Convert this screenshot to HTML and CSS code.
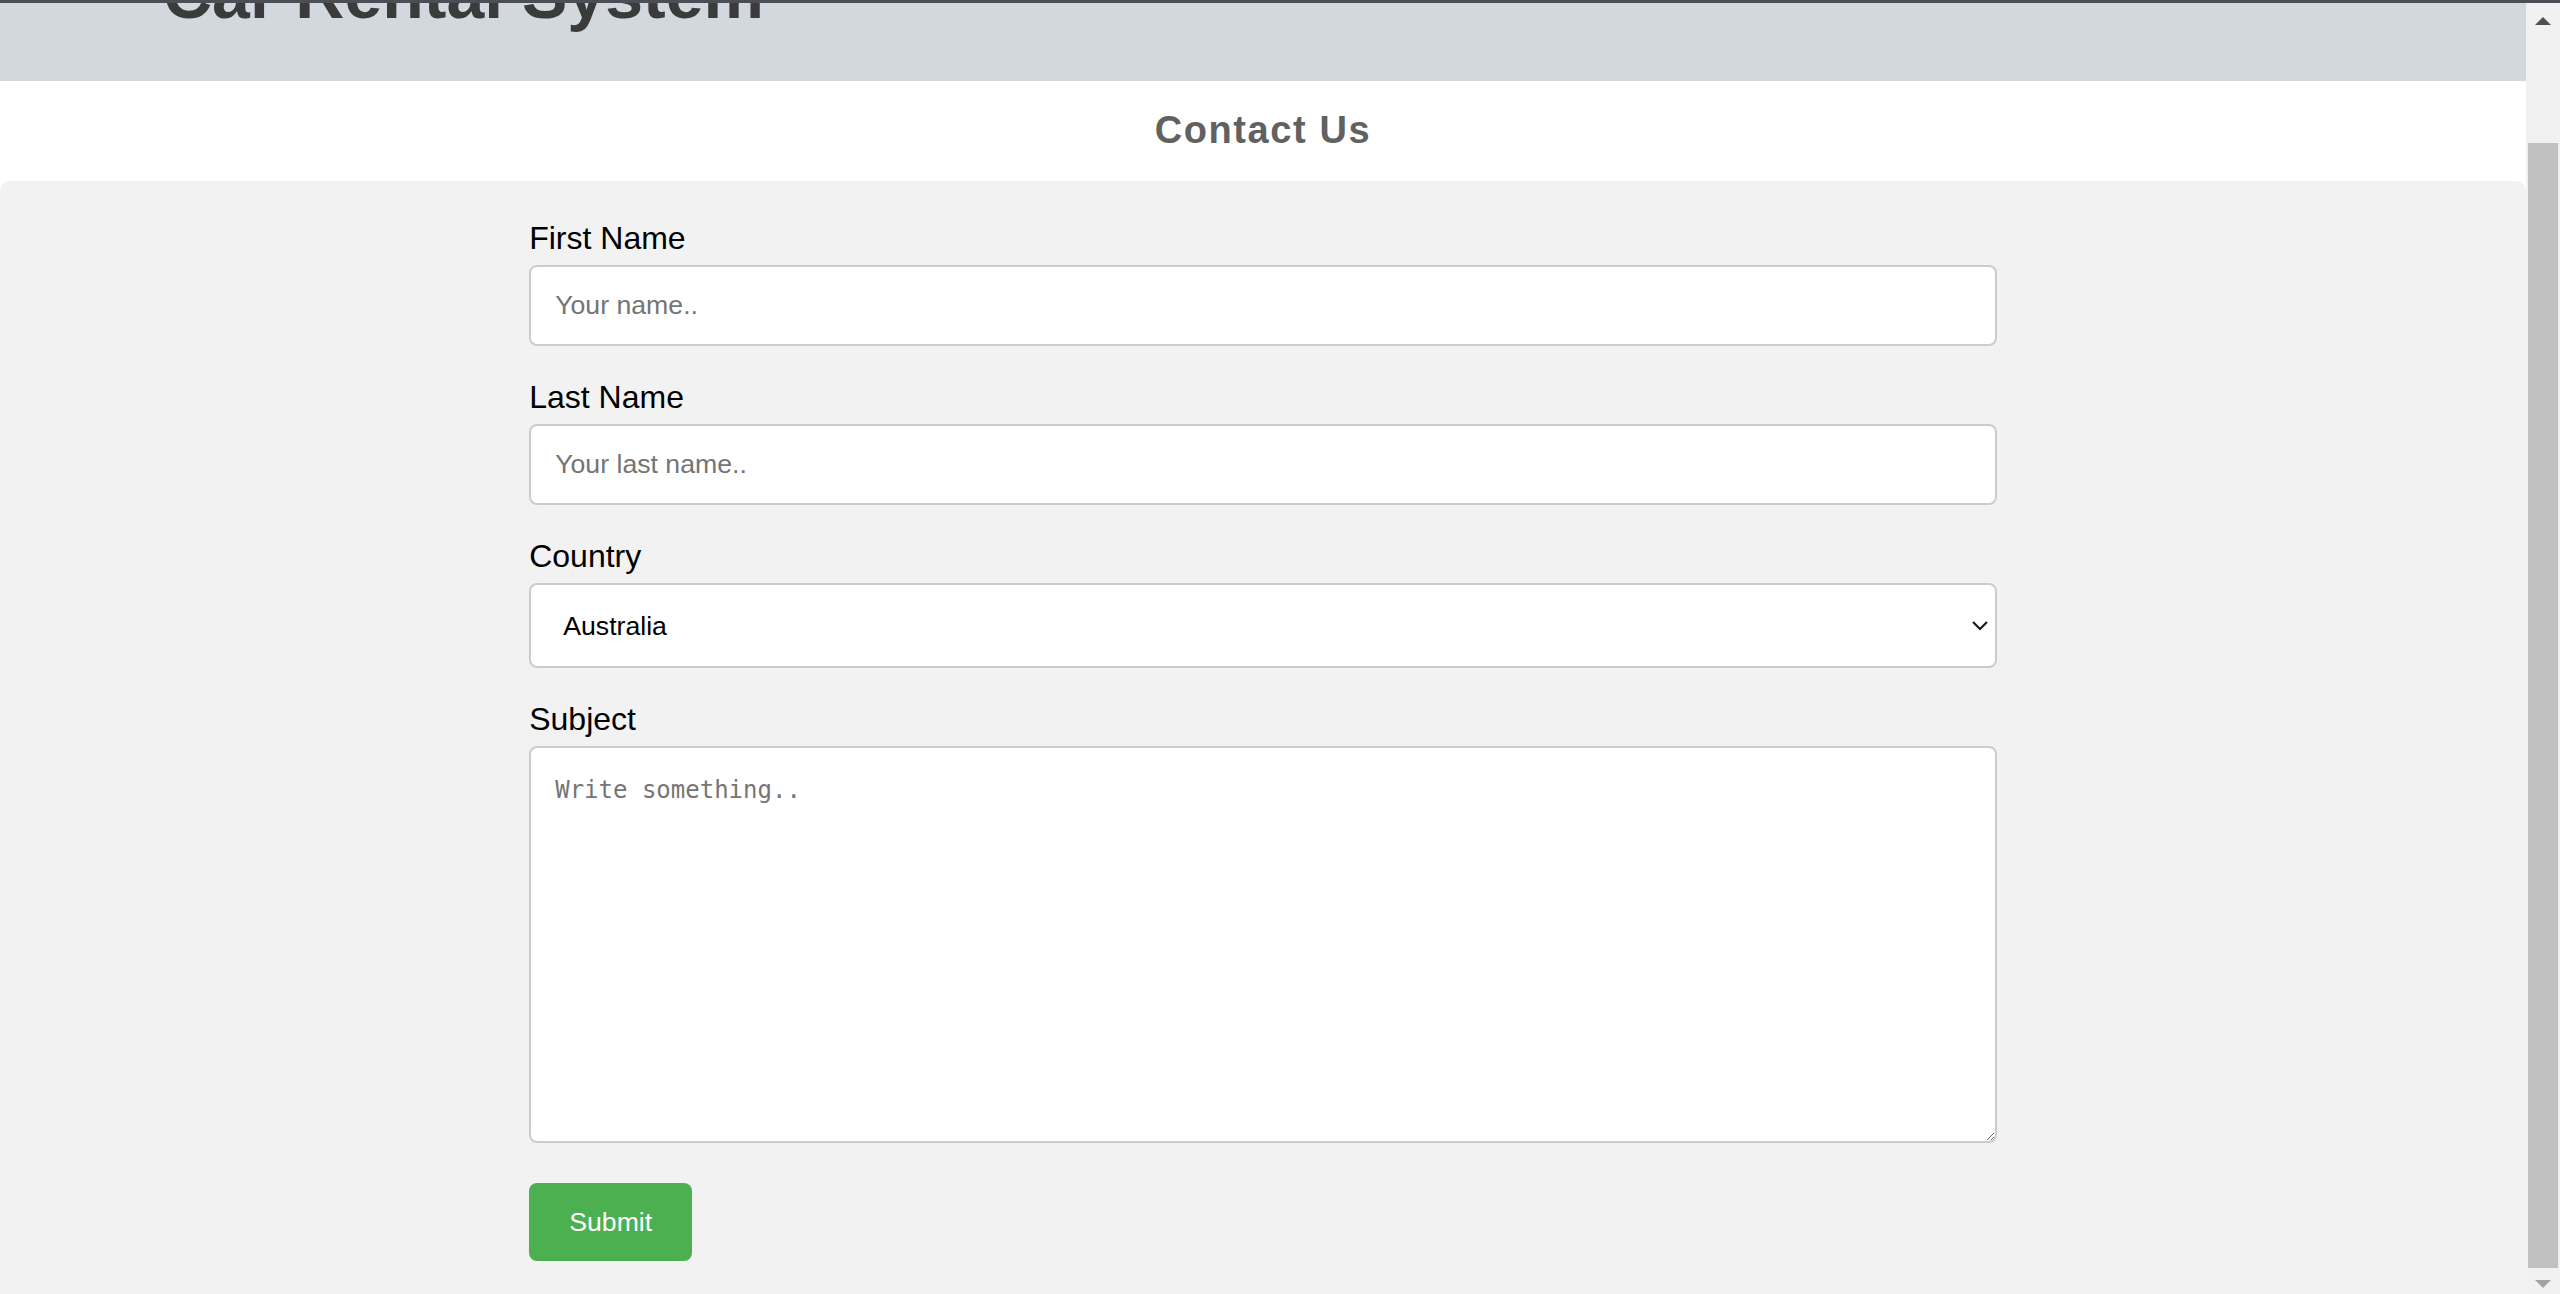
FILE: index.html
```html
<!DOCTYPE html>
<html lang="en">
<head>
<meta charset="utf-8">
<title>Contact Us - Car Rental System</title>
<link rel="stylesheet" href="styles.css">
</head>
<body>
<div class="window-edge"></div>
<div class="viewport">
  <div class="page">
    <header class="site-header">
      <h1 class="site-title">Car Rental System</h1>
    </header>
    <h2 class="page-title">Contact Us</h2>
    <div class="container">
      <form class="contact-form" onsubmit="return false;">
        <label class="field-label" for="fname">First Name</label>
        <input class="field-input" type="text" id="fname" name="firstname" placeholder="Your name..">

        <label class="field-label" for="lname">Last Name</label>
        <input class="field-input" type="text" id="lname" name="lastname" placeholder="Your last name..">

        <label class="field-label" for="country">Country</label>
        <div class="select-wrap">
          <select class="field-select" id="country" name="country">
            <option value="australia">Australia</option>
            <option value="canada">Canada</option>
            <option value="usa">USA</option>
          </select>
          <svg class="select-chevron" width="18" height="11" viewBox="0 0 18 11" aria-hidden="true">
            <path d="M2 2 L9 9 L16 2" fill="none" stroke="#1a1a1a" stroke-width="2.2"/>
          </svg>
        </div>

        <label class="field-label" for="subject">Subject</label>
        <textarea class="field-textarea" id="subject" name="subject" placeholder="Write something.."></textarea>

        <button class="submit-btn" type="submit">Submit</button>
      </form>
    </div>
  </div>
  <div class="scrollbar">
    <div class="scroll-arrow up"></div>
    <div class="scroll-track">
      <div class="scroll-thumb"></div>
    </div>
    <div class="scroll-arrow down"></div>
  </div>
</div>
</body>
</html>
```
FILE: styles.css
```css
html, body {
  margin: 0;
  padding: 0;
  height: 1294px;
  overflow: hidden;
  background: #ffffff;
  font-family: "Liberation Sans", Arial, sans-serif;
}

.window-edge {
  height: 3px;
  background: #4b4e54;
}

.viewport {
  display: flex;
  height: 1291px;
}

.page {
  flex: 1;
  min-width: 0;
  overflow: hidden;
  background: #ffffff;
}

/* header, scrolled partly out of view */
.site-header {
  height: 78px;
  overflow: hidden;
  background: #d3d7de;
  padding-left: 163px;
}

.site-title {
  margin: -46px 0 0;
  font-size: 68px;
  line-height: 74px;
  font-weight: bold;
  color: #3b3b3b;
  white-space: nowrap;
}

.page-title {
  margin: 0;
  padding: 27px 0 29px;
  text-align: center;
  font-size: 38px;
  line-height: 44px;
  font-weight: bold;
  letter-spacing: 1.6px;
  color: #616161;
}

.container {
  background: #f2f2f2;
  border-radius: 10px;
  padding: 40px;
  min-height: 1200px;
}

.contact-form {
  width: 60%;
  margin: 0 auto;
  display: flex;
  flex-direction: column;
  align-items: flex-start;
}

.field-label {
  display: block;
  font-size: 32px;
  line-height: 34px;
  color: #000000;
}

.field-input,
.field-select,
.field-textarea {
  box-sizing: border-box;
  width: 100%;
  border: 2px solid #cccccc;
  border-radius: 8px;
  background: #ffffff;
  margin: 10px 0 34px;
  font-size: 26.67px;
  color: #000000;
  outline: none;
}

.field-input {
  font-family: "Liberation Sans", Arial, sans-serif;
  padding: 23px 24px;
  height: 81px;
}

.field-input::placeholder {
  color: #757575;
}

.select-wrap {
  position: relative;
  width: 100%;
}

.field-select {
  -webkit-appearance: none;
  appearance: none;
  display: block;
  font-family: "Liberation Sans", Arial, sans-serif;
  height: 85px;
  padding: 0 60px 0 32px;
}

.select-chevron {
  position: absolute;
  right: 8px;
  top: 47px;
  pointer-events: none;
}

.field-textarea {
  display: block;
  height: 397px;
  padding: 27px 24px 24px;
  margin-bottom: 40px;
  font-family: "DejaVu Sans Mono", "Liberation Mono", monospace;
  font-size: 24px;
  line-height: 30px;
  resize: vertical;
}

.field-textarea::placeholder {
  color: #757575;
}

.submit-btn {
  background: #4caf50;
  color: #ffffff;
  border: none;
  border-radius: 8px;
  padding: 24px 40px;
  font-family: "Liberation Sans", Arial, sans-serif;
  font-size: 26.67px;
  line-height: 30px;
  cursor: pointer;
}

/* simulated window scrollbar */
.scrollbar {
  width: 34px;
  background: #f1f1f1;
  display: flex;
  flex-direction: column;
  align-items: center;
}

.scroll-arrow {
  width: 0;
  height: 0;
  border-left: 8px solid transparent;
  border-right: 8px solid transparent;
}

.scroll-arrow.up {
  margin-top: 14px;
  border-bottom: 8px solid #505050;
}

.scroll-arrow.down {
  margin-bottom: 8px;
  border-top: 8px solid #a3a3a3;
}

.scroll-track {
  flex: 1;
  width: 100%;
  display: flex;
  flex-direction: column;
  justify-content: flex-end;
  align-items: center;
  padding: 118px 0 12px;
  box-sizing: border-box;
}

.scroll-thumb {
  width: 30px;
  height: 1125px;
  background: #c1c1c1;
}
```
